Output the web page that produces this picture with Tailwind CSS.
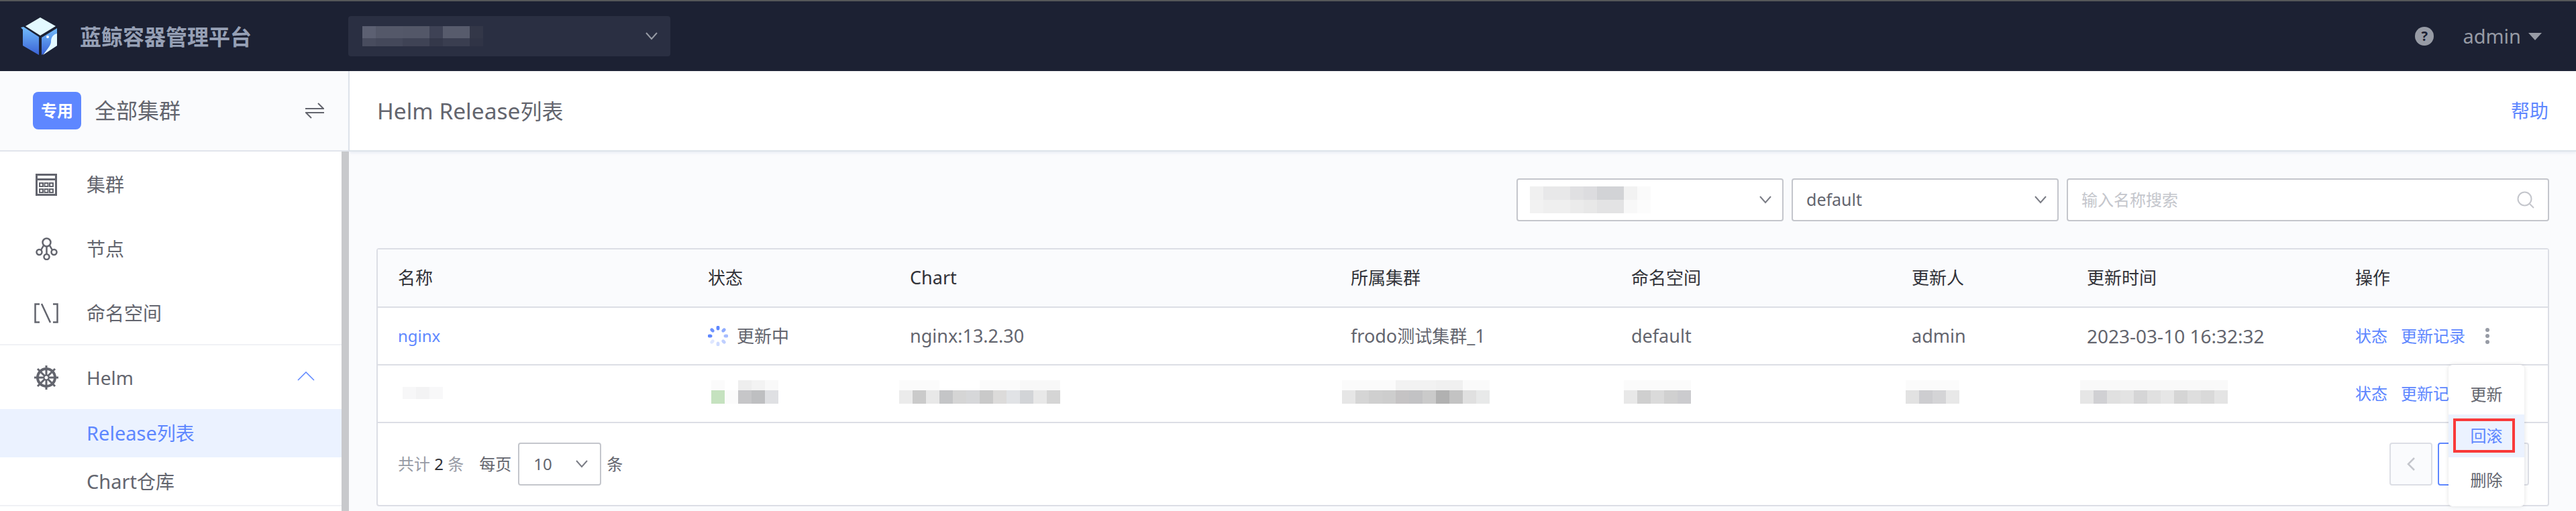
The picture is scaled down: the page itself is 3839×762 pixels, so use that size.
<!DOCTYPE html>
<html lang="zh-CN">
  <head>
    <meta charset="UTF-8" />
    <title>Helm Release列表</title>
    <script src="https://cdn.jsdelivr.net/npm/@tailwindcss/browser@4"></script>
  </head>
  <body class="h-[762px] overflow-hidden bg-[#fafbfd] text-[#63656e] font-['Noto_Sans','Noto_Sans_CJK_SC',sans-serif]">
    <!-- top bar -->
    <header class="h-[106px] flex items-center border-t-2 border-[#555759] bg-[#1c2133]">
      <div class="w-[519px] flex items-center pl-[30px]">
        <svg class="w-[60px] h-[60px] mr-[29px]" viewBox="30 24 60 60">
          <defs>
            <linearGradient id="cubeFace" x1="0" y1="0" x2="0" y2="1">
              <stop offset="0" stop-color="#72bcfa" />
              <stop offset="1" stop-color="#3a62d6" />
            </linearGradient>
          </defs>
          <path d="M38 39 60 26l23 13-23 14z" fill="#e3f9ff" />
          <path d="M31 41l4-1 23 15v27L34 68V44z" fill="url(#cubeFace)" />
          <path d="M62 56l23-14v26L62 82z" fill="url(#cubeFace)" />
          <path d="M85 50c-5 1-9 5-9 12 0 5-5 11-12 20l21-14z" fill="#e3f9ff" />
          <circle cx="71" cy="55" r="2" fill="#fff" />
        </svg>
        <span class="mt-[2px] text-[32px] font-bold text-[#96a0b5]">蓝鲸容器管理平台</span>
      </div>
      <div class="w-[480px] h-[60px] flex items-center justify-between rounded-[4px] bg-[#2a2f42] pl-[21px] pr-[18px]">
        <div>
          <div class="flex">
            <span class="w-[20px] h-[18px] bg-[#5c6072]"></span><span class="w-[40px] h-[18px] bg-[#545869]"></span><span class="w-[40px] h-[18px] bg-[#535768]"></span><span class="w-[20px] h-[18px] bg-[#3e4255]"></span><span class="w-[40px] h-[18px] bg-[#575b6c]"></span><span class="w-[20px] h-[18px] bg-[#333748]"></span>
          </div>
          <div class="flex">
            <span class="w-[20px] h-[12px] bg-[#484c5e]"></span><span class="w-[40px] h-[12px] bg-[#44485a]"></span><span class="w-[40px] h-[12px] bg-[#3f4355]"></span><span class="w-[20px] h-[12px] bg-[#34384a]"></span><span class="w-[40px] h-[12px] bg-[#3a3e50]"></span><span class="w-[20px] h-[12px] bg-[#303446]"></span>
          </div>
        </div>
        <svg class="w-[20px] h-[12px]" viewBox="0 0 20 12" fill="none" stroke="#979ba5" stroke-width="2"><path d="M2 1l8 9 8-9" /></svg>
      </div>
      <div class="ml-auto flex items-center pr-[51px]">
        <span class="w-[28px] h-[28px] rounded-full bg-[#979ba5] flex items-center justify-center text-[20px] font-bold text-[#1c2133]">?</span>
        <span class="ml-[43px] text-[29px] text-[#979ba5]">admin</span>
        <span class="ml-[11px] w-0 h-0 border-x-[10px] border-t-[11px] border-x-transparent border-t-[#979ba5]"></span>
      </div>
    </header>

    <div class="flex h-[656px]">
      <!-- sidebar -->
      <aside class="w-[521px] shrink-0 flex flex-col">
        <div class="h-[120px] shrink-0 flex items-center border-r-2 border-b-2 border-[#e1e5ec] bg-[#fafbfd] pl-[49px] pr-[36px]">
          <span class="w-[72px] h-[56px] rounded-[8px] bg-[#5e87ff] flex items-center justify-center text-[24px] font-bold text-white">专用</span>
          <span class="ml-[20px] text-[32px]">全部集群</span>
          <svg class="ml-auto w-[28px] h-[24px]" viewBox="0 0 28 24" fill="none" stroke="#63656e" stroke-width="2">
            <path d="M0 9h27L19 1M28 15H1l8 8" />
          </svg>
        </div>
        <div class="flex flex-1 min-h-0">
          <nav class="w-[509px] bg-white text-[28px]">
            <div class="h-[289px] border-b-2 border-[#f0f1f5] pt-[1px]">
              <a class="h-[96px] flex items-center pl-[129px] relative">
                <svg class="absolute left-[53px] w-[32px] h-[33px]" viewBox="0 0 32 33" fill="none" stroke="#63656e">
                  <rect x="1.5" y="1.5" width="29" height="30" stroke-width="3" />
                  <path d="M2 8.5h28" stroke-width="3" />
                  <path d="M6 14h5v5H6zM13.500 14h5v5h-5zM21 14h5v5h-5zM6 23h5v5H6zM13.500 23h5v5h-5zM21 23h5v5h-5z" stroke-width="2" />
                </svg>
                集群
              </a>
              <a class="h-[96px] flex items-center pl-[129px] relative">
                <svg class="absolute left-[53px] w-[33px] h-[34px]" viewBox="0 0 33 34" fill="none" stroke="#63656e" stroke-width="2.500">
                  <circle cx="16.500" cy="7.500" r="6" />
                  <circle cx="5.500" cy="22" r="4" />
                  <circle cx="27.500" cy="22" r="4" />
                  <circle cx="16.500" cy="29" r="4" />
                  <path d="M16.500 14v11M12 12l-4 7M21 12l4 7" />
                </svg>
                节点
              </a>
              <a class="h-[96px] flex items-center pl-[129px] relative">
                <svg class="absolute left-[51px] w-[36px] h-[30px]" viewBox="0 0 36 30" fill="none" stroke="#63656e" stroke-width="2.500">
                  <path d="M8 1.500H1.500v27H8M28 1.500h6.500v27H28M11 1l13 28" />
                </svg>
                命名空间
              </a>
            </div>
            <a class="h-[95px] flex items-center justify-between pl-[129px] pr-[40px] relative">
              <svg class="absolute left-[50px] w-[38px] h-[38px]" viewBox="0 0 38 38" fill="none" stroke="#63656e">
                <circle cx="19" cy="19" r="13" stroke-width="4" />
                <circle cx="19" cy="19" r="3.500" stroke-width="2" />
                <path d="M19 1v15M19 22v15M1 19h15M22 19h15M6 6l11 11M21 21l11 11M32 6 21 17M17 21 6 32" stroke-width="3" />
              </svg>
              Helm
              <svg class="w-[26px] h-[14px] mb-[4px]" viewBox="0 0 26 14" fill="none" stroke="#5e87ff" stroke-width="1.500"><path d="M1 13 13 1l12 12" /></svg>
            </a>
            <a class="h-[72px] flex items-center pl-[129px] bg-[#ebf2ff] text-[#5e87ff]"><span><span class="text-[29px]">Release</span>列表</span></a>
            <a class="h-[73px] flex items-center pl-[129px] border-b-2 border-[#f0f1f5]"><span><span class="text-[29px]">Chart</span>仓库</span></a>
          </nav>
          <div class="w-[11px] bg-[#c8c9cc]"></div>
        </div>
      </aside>

      <!-- content -->
      <main class="flex-1 min-w-0 flex flex-col relative">
        <div class="h-[120px] shrink-0 flex items-center justify-between border-b-2 border-[#dde4eb] bg-white shadow-[0_2px_4px_rgba(200,210,225,0.35)] pl-[41px] pr-[41px]">
          <h1 class="text-[32px]"><span class="text-[33.5px]">Helm Release</span>列表</h1>
          <a class="text-[28px] text-[#5e87ff]">帮助</a>
        </div>

        <div class="px-[40px] pt-[40px]">
          <!-- filters -->
          <div class="flex justify-end gap-[12px] text-[24px]">
            <div class="w-[398px] h-[64px] flex items-center justify-between rounded-[4px] border-2 border-[#c4c6cc] bg-white pl-[18px] pr-[16px]">
              <div>
                <div class="flex">
                  <span class="w-[20px] h-[20px] bg-[#f0f0f0]"></span><span class="w-[40px] h-[20px] bg-[#e8e8e9]"></span><span class="w-[20px] h-[20px] bg-[#e0e0e2]"></span><span class="w-[20px] h-[20px] bg-[#dcdcdf]"></span><span class="w-[40px] h-[20px] bg-[#d2d3d6]"></span><span class="w-[20px] h-[20px] bg-[#f2f2f2]"></span><span class="w-[20px] h-[20px] bg-[#fafafa]"></span>
                </div>
                <div class="flex">
                  <span class="w-[20px] h-[20px] bg-[#f2f2f2]"></span><span class="w-[40px] h-[20px] bg-[#efefef]"></span><span class="w-[20px] h-[20px] bg-[#ebebeb]"></span><span class="w-[20px] h-[20px] bg-[#e8e8e8]"></span><span class="w-[40px] h-[20px] bg-[#e3e3e4]"></span><span class="w-[20px] h-[20px] bg-[#f8f8f8]"></span><span class="w-[20px] h-[20px] bg-[#fcfcfc]"></span>
                </div>
              </div>
              <svg class="w-[18px] h-[12px]" viewBox="0 0 18 12" fill="none" stroke="#7a7c85" stroke-width="2"><path d="M1 1l8 9 8-9" /></svg>
            </div>
            <div class="w-[398px] h-[64px] flex items-center justify-between rounded-[4px] border-2 border-[#c4c6cc] bg-white pl-[20px] pr-[16px]">
              <span class="text-[25px]">default</span>
              <svg class="w-[18px] h-[12px]" viewBox="0 0 18 12" fill="none" stroke="#7a7c85" stroke-width="2"><path d="M1 1l8 9 8-9" /></svg>
            </div>
            <div class="w-[719px] h-[64px] flex items-center justify-between rounded-[4px] border-2 border-[#c4c6cc] bg-white pl-[20px] pr-[20px]">
              <span class="text-[#c4c6cc]">输入名称搜索</span>
              <svg class="w-[26px] h-[26px]" viewBox="0 0 26 26" fill="none" stroke="#c4c6cc" stroke-width="2"><circle cx="11.500" cy="11.500" r="10" /><path d="M19 19l6 6" /></svg>
            </div>
          </div>

          <!-- table -->
          <div class="mt-[40px] rounded-[4px] border-2 border-[#dcdee5] bg-white">
            <table class="w-full table-fixed border-collapse text-[26px]">
              <colgroup>
                <col class="w-[462px]" />
                <col class="w-[301px]" />
                <col class="w-[657px]" />
                <col class="w-[418px]" />
                <col class="w-[418px]" />
                <col class="w-[261px]" />
                <col class="w-[400px]" />
                <col />
              </colgroup>
              <thead>
                <tr class="h-[86px] border-b-2 border-[#dcdee5] bg-[#fafbfd] text-left text-[#313238]">
                  <th class="pl-[30px] font-normal">名称</th>
                  <th class="pl-[30px] font-normal">状态</th>
                  <th class="pl-[30px] font-normal text-[27px]">Chart</th>
                  <th class="pl-[30px] font-normal">所属集群</th>
                  <th class="pl-[30px] font-normal">命名空间</th>
                  <th class="pl-[30px] font-normal">更新人</th>
                  <th class="pl-[30px] font-normal">更新时间</th>
                  <th class="pl-[30px] font-normal">操作</th>
                </tr>
              </thead>
              <tbody>
                <tr class="h-[86px] border-b-2 border-[#dcdee5]">
                  <td class="pl-[30px] text-[24px] text-[#5e87ff]">nginx</td>
                  <td class="pl-[30px]">
                    <div class="flex items-center">
                      <svg class="w-[30px] h-[30px] mr-[13px]" viewBox="-15 -15 30 30" fill="#5e87ff">
                        <ellipse cx="0" cy="-12" rx="2.500" ry="3.500" />
                        <ellipse cx="8.500" cy="-8.500" rx="2.500" ry="3.500" transform="rotate(45 8.500 -8.500)" opacity=".7" />
                        <ellipse cx="12" cy="0" rx="2.500" ry="3.500" transform="rotate(90 12 0)" opacity=".55" />
                        <ellipse cx="8.500" cy="8.500" rx="2.500" ry="3.500" transform="rotate(135 8.500 8.500)" opacity=".4" />
                        <ellipse cx="0" cy="12" rx="2.500" ry="3.500" opacity=".3" />
                        <ellipse cx="-8.500" cy="8.500" rx="2.500" ry="3.500" transform="rotate(45 -8.500 8.500)" opacity=".2" />
                        <ellipse cx="-12" cy="0" rx="2.500" ry="3.500" transform="rotate(90 -12 0)" />
                        <ellipse cx="-8.500" cy="-8.500" rx="2.500" ry="3.500" transform="rotate(-45 -8.500 -8.500)" opacity=".9" />
                      </svg>
                      更新中
                    </div>
                  </td>
                  <td class="pl-[30px] text-[27px]">nginx:13.2.30</td>
                  <td class="pl-[30px]"><span class="text-[27px]">frodo</span>测试集群<span class="text-[27px]">_1</span></td>
                  <td class="pl-[30px] text-[27px]">default</td>
                  <td class="pl-[30px] text-[27px]">admin</td>
                  <td class="pl-[30px] text-[28px]">2023-03-10 16:32:32</td>
                  <td class="pl-[30px] text-[24px] text-[#5e87ff]">
                    <div class="flex items-center">
                      <a>状态</a>
                      <a class="ml-[20px]">更新记录</a>
                      <span class="ml-[30px] flex flex-col gap-[3px]">
                        <i class="block w-[6px] h-[6px] rounded-full bg-[#979ba5]"></i>
                        <i class="block w-[6px] h-[6px] rounded-full bg-[#979ba5]"></i>
                        <i class="block w-[6px] h-[6px] rounded-full bg-[#979ba5]"></i>
                      </span>
                    </div>
                  </td>
                </tr>
                <tr class="h-[86px] border-b-2 border-[#dcdee5]">
                  <td class="pl-[37px]">
                    <div class="flex mt-[-2px]">
                      <span class="w-[20px] h-[18px] bg-[#f7f7f8]"></span><span class="w-[20px] h-[18px] bg-[#f3f3f4]"></span><span class="w-[20px] h-[18px] bg-[#f8f8f9]"></span>
                    </div>
                  </td>
                  <td class="pl-[35px]">
                    <div class="mb-[6px]">
                      <div class="flex">
                        <span class="w-[20px] h-[15px] bg-[#fbfbfb]"></span><span class="w-[20px] h-[15px] bg-white"></span><span class="w-[20px] h-[15px] bg-[#eeeeee]"></span><span class="w-[20px] h-[15px] bg-[#f3f3f3]"></span><span class="w-[20px] h-[15px] bg-[#f9f9f9]"></span>
                      </div>
                      <div class="flex">
                        <span class="w-[20px] h-[20px] bg-[#c5e2bf]"></span><span class="w-[20px] h-[20px] bg-[#fbfbfb]"></span><span class="w-[20px] h-[20px] bg-[#c6c6c8]"></span><span class="w-[20px] h-[20px] bg-[#bebfc1]"></span><span class="w-[20px] h-[20px] bg-[#dfe0e3]"></span>
                      </div>
                    </div>
                  </td>
                  <td class="pl-[14px]">
                    <div class="mb-[6px]">
                      <div class="flex">
                        <span class="w-[60px] h-[15px] bg-[#fbfbfb]"></span><span class="w-[60px] h-[15px] bg-white"></span><span class="w-[60px] h-[15px] bg-[#fbfbfb]"></span><span class="w-[60px] h-[15px] bg-[#f8f8f8]"></span>
                      </div>
                      <div class="flex">
                        <span class="w-[20px] h-[20px] bg-[#ebebeb]"></span><span class="w-[20px] h-[20px] bg-[#cacaca]"></span><span class="w-[20px] h-[20px] bg-[#e8e8e8]"></span><span class="w-[20px] h-[20px] bg-[#c4c5c7]"></span><span class="w-[20px] h-[20px] bg-[#d5d5d5]"></span><span class="w-[20px] h-[20px] bg-[#d6d7d9]"></span><span class="w-[20px] h-[20px] bg-[#c9c9c9]"></span><span class="w-[20px] h-[20px] bg-[#dcdbda]"></span><span class="w-[20px] h-[20px] bg-[#e1e3e6]"></span><span class="w-[20px] h-[20px] bg-[#d2d4d7]"></span><span class="w-[20px] h-[20px] bg-[#e8e8e8]"></span><span class="w-[20px] h-[20px] bg-[#d5d5d5]"></span>
                      </div>
                    </div>
                  </td>
                  <td class="pl-[17px]">
                    <div class="mb-[6px]">
                      <div class="flex">
                        <span class="w-[80px] h-[15px] bg-[#fbfbfb]"></span><span class="w-[60px] h-[15px] bg-[#f2f2f2]"></span><span class="w-[40px] h-[15px] bg-[#f0f0f0]"></span><span class="w-[40px] h-[15px] bg-[#fafafa]"></span>
                      </div>
                      <div class="flex">
                        <span class="w-[20px] h-[20px] bg-[#e6e6e6]"></span><span class="w-[20px] h-[20px] bg-[#d5d5d5]"></span><span class="w-[20px] h-[20px] bg-[#cfcfcf]"></span><span class="w-[20px] h-[20px] bg-[#cdcdcd]"></span><span class="w-[20px] h-[20px] bg-[#c5c3c4]"></span><span class="w-[20px] h-[20px] bg-[#c2c2c4]"></span><span class="w-[20px] h-[20px] bg-[#cacaca]"></span><span class="w-[20px] h-[20px] bg-[#b1b1b1]"></span><span class="w-[20px] h-[20px] bg-[#c3c3c3]"></span><span class="w-[20px] h-[20px] bg-[#e0e0e0]"></span><span class="w-[20px] h-[20px] bg-[#e8e9e9]"></span>
                      </div>
                    </div>
                  </td>
                  <td class="pl-[19px]">
                    <div class="mb-[6px]">
                      <div class="flex">
                        <span class="w-[100px] h-[15px] bg-[#fbfbfb]"></span>
                      </div>
                      <div class="flex">
                        <span class="w-[20px] h-[20px] bg-[#e8e8e8]"></span><span class="w-[20px] h-[20px] bg-[#cfcfcf]"></span><span class="w-[20px] h-[20px] bg-[#dadada]"></span><span class="w-[20px] h-[20px] bg-[#d0d0d0]"></span><span class="w-[20px] h-[20px] bg-[#cbcbce]"></span>
                      </div>
                    </div>
                  </td>
                  <td class="pl-[21px]">
                    <div class="mb-[6px]">
                      <div class="flex">
                        <span class="w-[80px] h-[15px] bg-[#fbfbfb]"></span>
                      </div>
                      <div class="flex">
                        <span class="w-[20px] h-[20px] bg-[#e2e2e2]"></span><span class="w-[20px] h-[20px] bg-[#cdcdd0]"></span><span class="w-[20px] h-[20px] bg-[#d4d4d6]"></span><span class="w-[20px] h-[20px] bg-[#e8e8e8]"></span>
                      </div>
                    </div>
                  </td>
                  <td class="pl-[20px]">
                    <div class="mb-[6px]">
                      <div class="flex">
                        <span class="w-[220px] h-[15px] bg-[#f9f9f9]"></span>
                      </div>
                      <div class="flex">
                        <span class="w-[20px] h-[20px] bg-[#e6e6e6]"></span><span class="w-[20px] h-[20px] bg-[#d0d0d3]"></span><span class="w-[20px] h-[20px] bg-[#e0e0e0]"></span><span class="w-[20px] h-[20px] bg-[#e3e3e3]"></span><span class="w-[20px] h-[20px] bg-[#d5d5d6]"></span><span class="w-[20px] h-[20px] bg-[#e0e0e0]"></span><span class="w-[20px] h-[20px] bg-[#e6e6e6]"></span><span class="w-[20px] h-[20px] bg-[#d5d5d5]"></span><span class="w-[20px] h-[20px] bg-[#dedede]"></span><span class="w-[20px] h-[20px] bg-[#d9d9d9]"></span><span class="w-[20px] h-[20px] bg-[#e4e4e4]"></span>
                      </div>
                    </div>
                  </td>
                  <td class="pl-[30px] text-[24px] text-[#5e87ff]">
                    <div class="flex items-center">
                      <a>状态</a>
                      <a class="ml-[20px]">更新记录</a>
                    </div>
                  </td>
                </tr>
              </tbody>
            </table>

            <!-- pagination -->
            <div class="h-[122px] flex items-center justify-between pl-[30px] pr-[28px] text-[24px]">
              <div class="flex items-center">
                <span class="text-[#979ba5]">共计 <span class="text-[#313238]">2</span> 条</span>
                <span class="ml-[23px]">每页</span>
                <div class="ml-[10px] w-[124px] h-[64px] flex items-center justify-between rounded-[4px] border-2 border-[#c4c6cc] pl-[21px] pr-[18px]">
                  10
                  <svg class="w-[18px] h-[12px]" viewBox="0 0 18 12" fill="none" stroke="#7a7c85" stroke-width="2"><path d="M1 1l8 9 8-9" /></svg>
                </div>
                <span class="ml-[8px]">条</span>
              </div>
              <div class="flex gap-[8px]">
                <span class="w-[64px] h-[64px] flex items-center justify-center rounded-[4px] border-2 border-[#dcdee5] bg-[#fafbfd]">
                  <svg class="w-[12px] h-[20px]" viewBox="0 0 12 20" fill="none" stroke="#c4c6cc" stroke-width="2.500"><path d="M11 1 2 10l9 9" /></svg>
                </span>
                <span class="w-[64px] h-[64px] flex items-center justify-center rounded-[4px] border-2 border-[#5e87ff] text-[#5e87ff]">1</span>
                <span class="w-[64px] h-[64px] flex items-center justify-center rounded-[4px] border-2 border-[#dcdee5] bg-[#fafbfd]"></span>
              </div>
            </div>
          </div>
        </div>

        <!-- row actions menu -->
        <div class="absolute left-[3128px] top-[438px] w-[113px] h-[211px] flex flex-col rounded-[6px] bg-white pt-[14px] pb-[5px] text-[24px] shadow-[0_0_6px_rgba(0,0,0,0.12)]">
          <a class="h-[60px] flex items-center justify-center">更新</a>
          <a class="h-[64px] flex items-center justify-center bg-[#ebf2ff] text-[#5e87ff] relative">
            回滚
            <span class="absolute left-[7px] top-[6px] w-[92px] h-[51px] border-4 border-[#f93a3a]"></span>
          </a>
          <a class="h-[68px] flex items-center justify-center">删除</a>
        </div>
      </main>
    </div>
  </body>
</html>
